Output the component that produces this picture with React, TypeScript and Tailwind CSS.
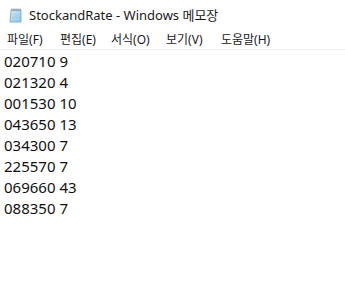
import React from "react";

const lines = [
  "020710 9",
  "021320 4",
  "001530 10",
  "043650 13",
  "034300 7",
  "225570 7",
  "069660 43",
  "088350 7",
];

const menus = [
  { label: "파일(F)", w: "w-[53px]" },
  { label: "편집(E)", w: "w-[51px]" },
  { label: "서식(O)", w: "w-[55px]" },
  { label: "보기(V)", w: "w-[55px]" },
  { label: "도움말(H)", w: "w-auto" },
];

function NotepadIcon() {
  return (
    <svg width="16" height="16" viewBox="0 0 16 16">
      <defs>
        <linearGradient id="pg" x1="0" y1="0" x2="1" y2="1">
          <stop offset="0" stopColor="#d9ecf8" />
          <stop offset="1" stopColor="#8cc3e6" />
        </linearGradient>
      </defs>
      <path d="M3 3 H13 V15 H2 Z" fill="url(#pg)" stroke="#6fa3c8" strokeWidth="0.8" />
      <path d="M4 1.5 V4 M6 1.5 V4 M8 1.5 V4 M10 1.5 V4 M12 1.5 V4" stroke="#7a8590" strokeWidth="0.9" />
      <path d="M4.5 7 H11 M4.3 9 H11 M4.1 11 H11 M3.9 13 H11" stroke="#a9cde6" strokeWidth="0.6" />
    </svg>
  );
}

export default function App() {
  return (
    <div className="w-[345px] h-[283px] bg-white overflow-hidden flex flex-col" style={{ fontFamily: "'Noto Sans', 'Noto Sans CJK KR', sans-serif" }}>
      <div className="h-[30px] flex items-center pl-[8px] gap-[5px] shrink-0">
        <NotepadIcon />
        <span className="text-[13px] text-[#1a1a1a] leading-none pt-[1px]">StockandRate - Windows 메모장</span>
      </div>
      <div className="h-[20px] flex items-center pl-[7px] border-b border-[#f0f0f0] shrink-0">
        {menus.map((m) => (
          <span key={m.label} className={`${m.w} text-[12px] text-[#1a1a1a] leading-none`}>
            {m.label}
          </span>
        ))}
      </div>
      <div className="pl-[4px] pt-[1px] text-[15px] leading-[21px] text-[#111]" style={{ fontFamily: "'Noto Sans', 'Noto Sans CJK KR', sans-serif" }}>
        {lines.map((l) => (
          <div key={l}>{l}</div>
        ))}
      </div>
    </div>
  );
}
